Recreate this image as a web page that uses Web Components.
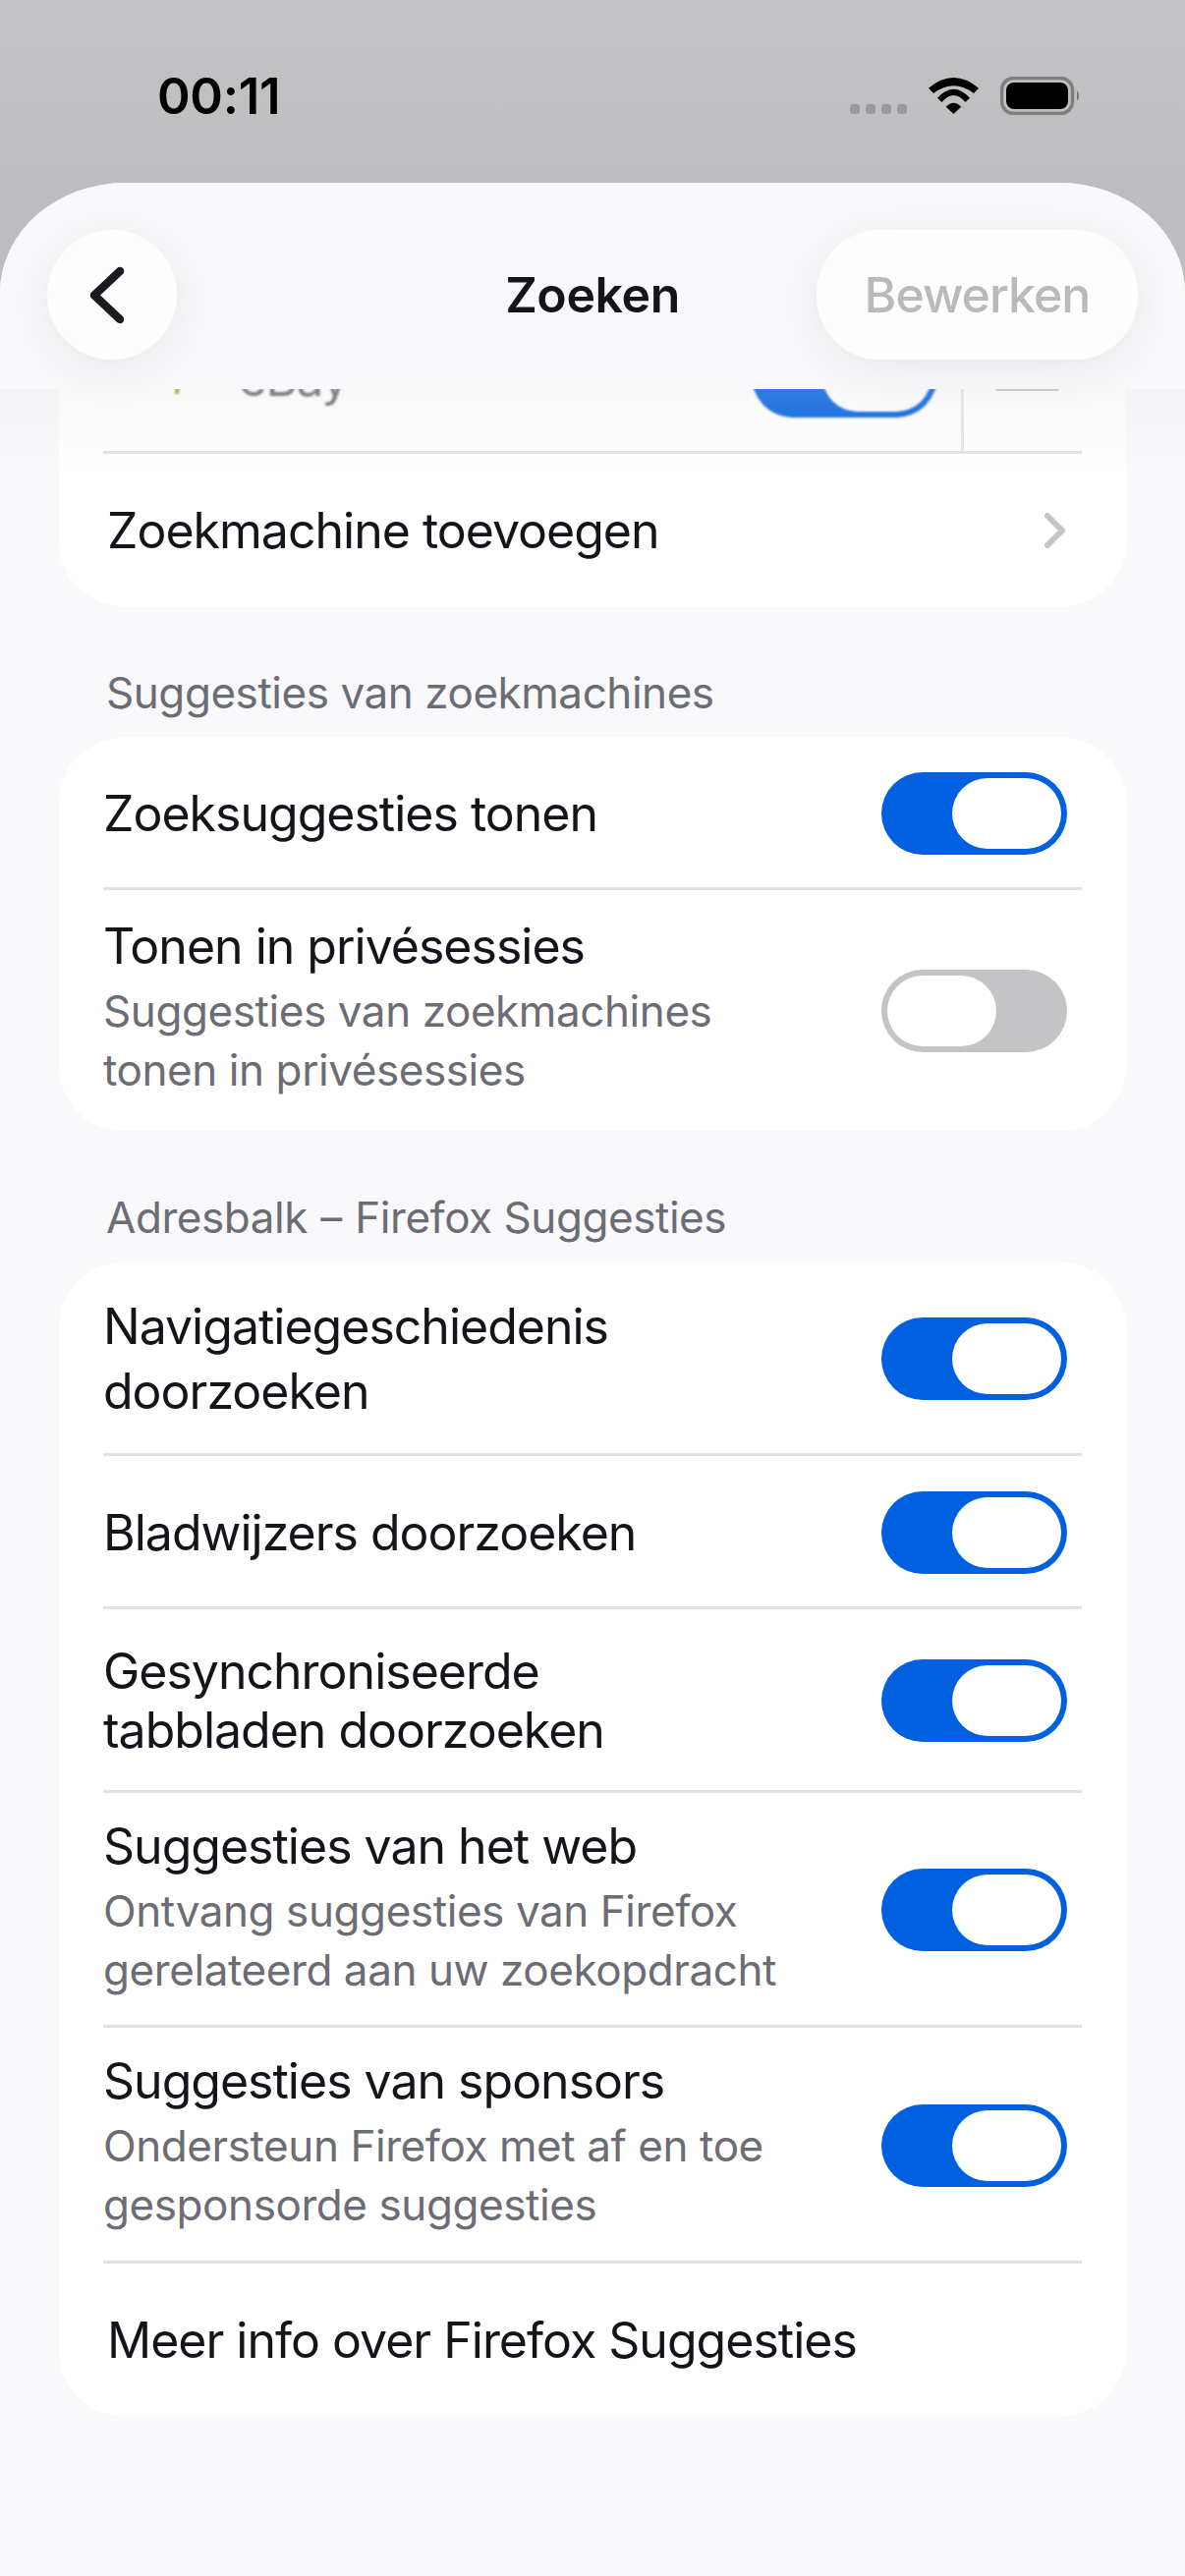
<!DOCTYPE html>
<html lang="nl">
<head>
<meta charset="utf-8">
<title>Zoeken</title>
<style>
  html, body { margin: 0; height: 2622px; overflow: hidden; }
  body { background: linear-gradient(#c3c3c5, #bdbdbf 200px); font-family: Inter, "Liberation Sans", sans-serif; color: #15141a; display: flex; flex-direction: column; }
</style>
</head>
<body>
<status-bar></status-bar>
<app-sheet>
  <nav-header slot="header" heading="Zoeken" action="Bewerken"></nav-header>

  <group-card style="margin-top:-90px">
    <engine-row name="eBay"></engine-row>
    <setting-row height="155" label="Zoekmachine toevoegen" chevron style="--inset:4px"></setting-row>
  </group-card>

  <group-label>Suggesties van zoekmachines</group-label>
  <group-card>
    <setting-row height="155" label="Zoeksuggesties tonen" on></setting-row>
    <setting-row height="245" label="Tonen in privésessies" off>Suggesties van zoekmachines<br>tonen in privésessies</setting-row>
  </group-card>

  <group-label>Adresbalk <span style="margin:0 1.5px">–</span> Firefox Suggesties</group-label>
  <group-card>
    <setting-row height="197" label="Navigatiegeschiedenis<br>doorzoeken" on style="--title-lh:66px"></setting-row>
    <setting-row height="156" label="Bladwijzers doorzoeken" on></setting-row>
    <setting-row height="187" label="Gesynchroniseerde<br>tabbladen doorzoeken" on></setting-row>
    <setting-row height="239" label="Suggesties van het web" on>Ontvang suggesties van Firefox<br>gerelateerd aan uw zoekopdracht</setting-row>
    <setting-row height="240" label="Suggesties van sponsors" on>Ondersteun Firefox met af en toe<br>gesponsorde suggesties</setting-row>
    <setting-row height="155" label="Meer info over Firefox Suggesties" style="--inset:4px"></setting-row>
  </group-card>
</app-sheet>

<script>
class StatusBar extends HTMLElement {
  connectedCallback() {
    this.attachShadow({ mode: 'open' });
    this.shadowRoot.innerHTML = `
      <style>
        :host { display: flex; height: 186px; flex: none; padding: 0 106px 0 160px; box-sizing: border-box; position: relative; }
        .time { font-size: 51px; font-weight: 600; line-height: 60px; margin-top: 68px; color: #000; letter-spacing: -.3px; }
        .icons { margin-left: auto; display: flex; align-items: flex-end; height: 39px; margin-top: 78px; }
        .dots { display: flex; gap: 6px; margin-bottom: 1px; }
        .dots i { width: 10px; height: 10px; border-radius: 3px; background: #9b9b9d; }
        .wifi { margin: 0 22px; margin-bottom: 1px; display: block; }
        .batt { display: block; }
      </style>
      <div class="time">00:11</div>
      <div class="icons">
        <div class="dots"><i></i><i></i><i></i><i></i></div>
        <svg class="wifi" width="51" height="37" viewBox="0 0 51 37">
          <path d="M0 10.7Q25.5-10.7 51 10.7L46 16Q25.5 .6 5 16Z"/>
          <path d="M9 20.7Q25.5 2.7 42 20.7L37.5 25Q25.5 11 13.5 25Z"/>
          <path d="M17.7 29.7Q25.5 21.7 33.3 29.7L25.5 37Z"/>
        </svg>
        <svg class="batt" width="82" height="39" viewBox="0 0 82 39">
          <rect x="1.5" y="1.5" width="72" height="36" rx="12" fill="none" stroke="#7f7f81" stroke-width="3.5"/>
          <rect x="6" y="6" width="63" height="27" rx="8" fill="#000"/>
          <path d="M78 14Q82 19.5 78 25Z" fill="#6f6f71"/>
        </svg>
      </div>
    `;
  }
}

class AppSheet extends HTMLElement {
  connectedCallback() {
    this.attachShadow({ mode: 'open' });
    this.shadowRoot.innerHTML = `
      <style>
        :host { display: flex; flex-direction: column; flex: 1; min-height: 0; background: #f9f9fb; border-radius: 128px 128px 0 0 / 112px 112px 0 0; overflow: hidden; }
        .scroll { flex: 1; min-height: 0; overflow: hidden; padding: 0 60px; }
        ::slotted([slot="header"]) { flex: none; }
      </style>
      <slot name="header"></slot>
      <div class="scroll"><slot></slot></div>
    `;
  }
}

class NavHeader extends HTMLElement {
  connectedCallback() {
    this.attachShadow({ mode: 'open' });
    this.shadowRoot.innerHTML = `
      <style>
        :host { display: grid; grid-template-columns: 1fr auto 1fr; align-items: center; height: 210px; box-sizing: border-box; padding: 48px 48px 30px; background: #f9f9fb; position: relative; z-index: 2; }
        :host::after { content: ""; position: absolute; left: 0; right: 0; top: 100%; height: 90px; background: linear-gradient(rgba(225,225,230,.22), rgba(255,255,255,0)); pointer-events: none; }
        .btn { height: 132px; background: #fdfdfe; box-shadow: 0 10px 50px rgba(0,0,0,.075); display: flex; align-items: center; justify-content: center; }
        .back { width: 132px; border-radius: 50%; }
        .back svg { display: block; }
        .edit { width: 327px; border-radius: 64px; justify-self: end; font-size: 50px; font-weight: 500; letter-spacing: -1px; color: #b9b9bd; }
        h1 { margin: 0; font-size: 50px; font-weight: 600; line-height: 60px; letter-spacing: -.4px; color: #15141a; }
      </style>
      <div class="btn back">
        <svg width="132" height="132" viewBox="0 0 132 132"><path d="M74 42 48 66.5 74 91" fill="none" stroke="#1a1a1f" stroke-width="8.5" stroke-linecap="round" stroke-linejoin="round"/></svg>
      </div>
      <h1>${this.getAttribute('heading')}</h1>
      <div class="btn edit">${this.getAttribute('action')}</div>
    `;
  }
}

class GroupCard extends HTMLElement {
  connectedCallback() {
    this.attachShadow({ mode: 'open' });
    this.shadowRoot.innerHTML = `
      <style>
        :host { display: block; background: #fff; border-radius: 66px; overflow: hidden; }
      </style>
      <slot></slot>
    `;
  }
}

class GroupLabel extends HTMLElement {
  connectedCallback() {
    this.attachShadow({ mode: 'open' });
    this.shadowRoot.innerHTML = `
      <style>
        :host { display: block; padding: 58px 0 16px 48px; font-size: 44px; line-height: 60px; letter-spacing: -.45px; color: #6c6c74; }
      </style>
      <slot></slot>
    `;
  }
}

class ToggleSwitch extends HTMLElement {
  connectedCallback() {
    this.attachShadow({ mode: 'open' });
    this.shadowRoot.innerHTML = `
      <style>
        :host { display: flex; flex: none; width: 189px; height: 84px; box-sizing: border-box; padding: 6px; border-radius: 42px; background: #c4c4c6; }
        :host([on]) { background: #0060df; justify-content: flex-end; }
        .thumb { width: 111px; height: 72px; border-radius: 36px; background: #fff; }
      </style>
      <div class="thumb"></div>
    `;
  }
}

class SettingRow extends HTMLElement {
  connectedCallback() {
    const h = this.getAttribute('height');
    const hasSub = this.childNodes.length > 0;
    this.attachShadow({ mode: 'open' });
    this.shadowRoot.innerHTML = `
      <style>
        :host { display: block; padding: 0 45px; }
        .box { display: flex; align-items: center; box-sizing: border-box; height: ${h}px; padding-right: 15px; border-bottom: 3px solid #e0e0e6; }
        :host([on]) .box { padding-top: 2px; }
        :host(:last-child) .box { border-bottom: 0; }
        .text { flex: 1; min-width: 0; padding-left: var(--inset, 0); letter-spacing: -1px; }
        .text.has-sub { margin-bottom: 5px; }
        .title { font-size: 50px; line-height: var(--title-lh, 60px); color: #15141a; }
        .sub { font-size: 44px; line-height: 60px; letter-spacing: -.42px; color: #6c6c74; margin-top: 6px; }
        .chev { display: block; flex: none; }
      </style>
      <div class="box">
        <div class="text ${hasSub ? 'has-sub' : ''}">
          <div class="title">${this.getAttribute('label')}</div>
          ${hasSub ? '<div class="sub"><slot></slot></div>' : ''}
        </div>
        ${this.hasAttribute('on') ? '<toggle-switch on></toggle-switch>' : ''}
        ${this.hasAttribute('off') ? '<toggle-switch></toggle-switch>' : ''}
        ${this.hasAttribute('chevron') ? '<svg class="chev" width="21" height="36" viewBox="0 0 21 36" style="margin-right:2px"><path d="M3 3 18 18 3 33" fill="none" stroke="#c4c4c6" stroke-width="6" stroke-linecap="round" stroke-linejoin="round"/></svg>' : ''}
      </div>
    `;
  }
}

// half hidden row below the header, the one with the reorder handle
class EngineRow extends HTMLElement {
  connectedCallback() {
    this.attachShadow({ mode: 'open' });
    this.shadowRoot.innerHTML = `
      <style>
        :host { display: block; padding: 0 45px; }
        .box { display: flex; align-items: stretch; box-sizing: border-box; height: 156px; border-bottom: 3px solid #e0e0e6; }
        .cell { display: flex; align-items: center; }
        .main { flex: 1; padding-left: 30px; filter: blur(.8px); }
        .name { font-size: 49px; letter-spacing: -1px; margin: 5px 0 0 58px; color: #66666c; }
        .logo { display: block; }
        toggle-switch { margin-left: auto; margin-right: 24px; }
        .sep { width: 3px; background: #e6e6e8; }
        .grip { width: 65px; margin: 0 23px 0 32px; flex-direction: column; justify-content: center; gap: 8px; }
        .grip i { width: 65px; height: 5px; background: #c9c9cc; border-radius: 2px; }
      </style>
      <div class="box">
        <div class="cell main">
          <svg class="logo" width="50" height="60" viewBox="0 0 50 60"><path d="M44 30 49 30 47 48 43 48Z" fill="#86b817"/></svg>
          <span class="name">${this.getAttribute('name')}</span>
          <toggle-switch on></toggle-switch>
        </div>
        <div class="sep"></div>
        <div class="cell grip"><i></i><i></i><i></i></div>
      </div>
    `;
  }
}

customElements.define('toggle-switch', ToggleSwitch);
customElements.define('status-bar', StatusBar);
customElements.define('app-sheet', AppSheet);
customElements.define('nav-header', NavHeader);
customElements.define('group-card', GroupCard);
customElements.define('group-label', GroupLabel);
customElements.define('setting-row', SettingRow);
customElements.define('engine-row', EngineRow);
</script>
</body>
</html>
